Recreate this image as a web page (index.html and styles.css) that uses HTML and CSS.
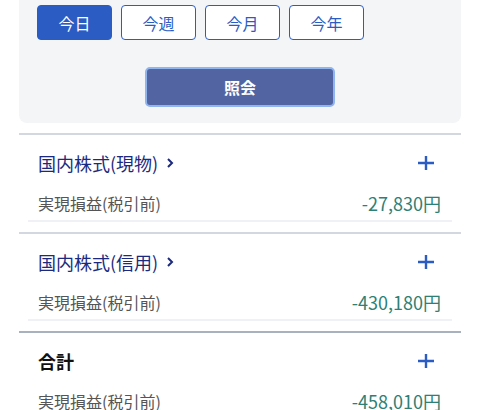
FILE: index.html
```html
<!DOCTYPE html>
<html lang="ja">
<head>
    <meta charset="UTF-8">
    <meta name="viewport" content="width=device-width, initial-scale=1.0">
    <title>実現損益</title>
    <link rel="stylesheet" href="styles.css">
</head>
<body>
    <div class="wrap">
        <!-- Period filter -->
        <div class="filter-panel">
            <div class="period-tabs">
                <button class="period-btn active">今日</button>
                <button class="period-btn">今週</button>
                <button class="period-btn">今月</button>
                <button class="period-btn">今年</button>
            </div>
            <button class="search-btn">照会</button>
        </div>

        <!-- Results -->
        <div class="section">
            <div class="section-head">
                <a class="section-title link">国内株式(現物)
                    <svg class="chevron" width="8" height="12" viewBox="0 0 8 12"><path d="M2 2 L6 6 L2 10" fill="none" stroke="#1b2a7e" stroke-width="2"/></svg>
                </a>
                <svg class="plus" width="16" height="16" viewBox="0 0 16 16"><path d="M0 8 H16 M8 1 V15" stroke="#2a5cc4" stroke-width="2.4"/></svg>
            </div>
            <div class="row">
                <span class="label">実現損益(税引前)</span>
                <span class="value">-27,830円</span>
            </div>
        </div>

        <div class="section">
            <div class="section-head">
                <a class="section-title link">国内株式(信用)
                    <svg class="chevron" width="8" height="12" viewBox="0 0 8 12"><path d="M2 2 L6 6 L2 10" fill="none" stroke="#1b2a7e" stroke-width="2"/></svg>
                </a>
                <svg class="plus" width="16" height="16" viewBox="0 0 16 16"><path d="M0 8 H16 M8 1 V15" stroke="#2a5cc4" stroke-width="2.4"/></svg>
            </div>
            <div class="row">
                <span class="label">実現損益(税引前)</span>
                <span class="value">-430,180円</span>
            </div>
        </div>

        <div class="section total">
            <div class="section-head">
                <span class="section-title">合計</span>
                <svg class="plus" width="16" height="16" viewBox="0 0 16 16"><path d="M0 8 H16 M8 1 V15" stroke="#2a5cc4" stroke-width="2.4"/></svg>
            </div>
            <div class="row">
                <span class="label">実現損益(税引前)</span>
                <span class="value">-458,010円</span>
            </div>
        </div>
    </div>
</body>
</html>
```

FILE: styles.css
```css
body {
    font-family: "Noto Sans CJK JP", "Noto Sans", sans-serif;
    margin: 0;
    padding: 0;
    background: #ffffff;
    overflow: hidden;
}

.wrap {
    margin: 0 19px;
}

/* Filter panel */
.filter-panel {
    background: #f4f5f7;
    border-radius: 0 0 8px 8px;
    padding: 5px 18px 16px;
    display: flex;
    flex-direction: column;
    align-items: center;
}

.period-tabs {
    display: flex;
    gap: 9px;
    align-self: flex-start;
}

.period-btn {
    width: 75px;
    height: 35px;
    border: 1.5px solid #2a5cc4;
    border-radius: 4px;
    background: #ffffff;
    color: #2a5cc4;
    font-family: inherit;
    font-size: 16px;
    padding: 0;
    cursor: pointer;
}

.period-btn.active {
    background: #2a5cc4;
    color: #ffffff;
}

.search-btn {
    margin-top: 27px;
    width: 190px;
    height: 40px;
    background: #5364a2;
    border: 2px solid #8fb4ee;
    border-radius: 5px;
    color: #ffffff;
    font-family: inherit;
    font-size: 16px;
    font-weight: bold;
    cursor: pointer;
}

/* Result sections */
.section {
    border-top: 2px solid #d3d7e0;
    margin-top: 10px;
}

.section + .section {
    margin-top: 0;
}

.section.total {
    border-top-color: #a9b0be;
}

.section-head {
    height: 56px;
    display: flex;
    align-items: center;
    justify-content: space-between;
    padding: 0 27px 0 19px;
}

.section-title {
    font-size: 18px;
    color: #1b2a7e;
    display: flex;
    align-items: center;
    gap: 8px;
}

.total .section-title {
    color: #111111;
    font-weight: bold;
}

.row {
    margin: 0 9px 10px;
    padding: 2px 11px 7px 10px;
    border-bottom: 2px solid #eff1f5;
    display: flex;
    justify-content: space-between;
    align-items: center;
    line-height: 20px;
}

.label {
    font-size: 16px;
    color: #555555;
}

.value {
    font-size: 18px;
    color: #2e8074;
}
```
